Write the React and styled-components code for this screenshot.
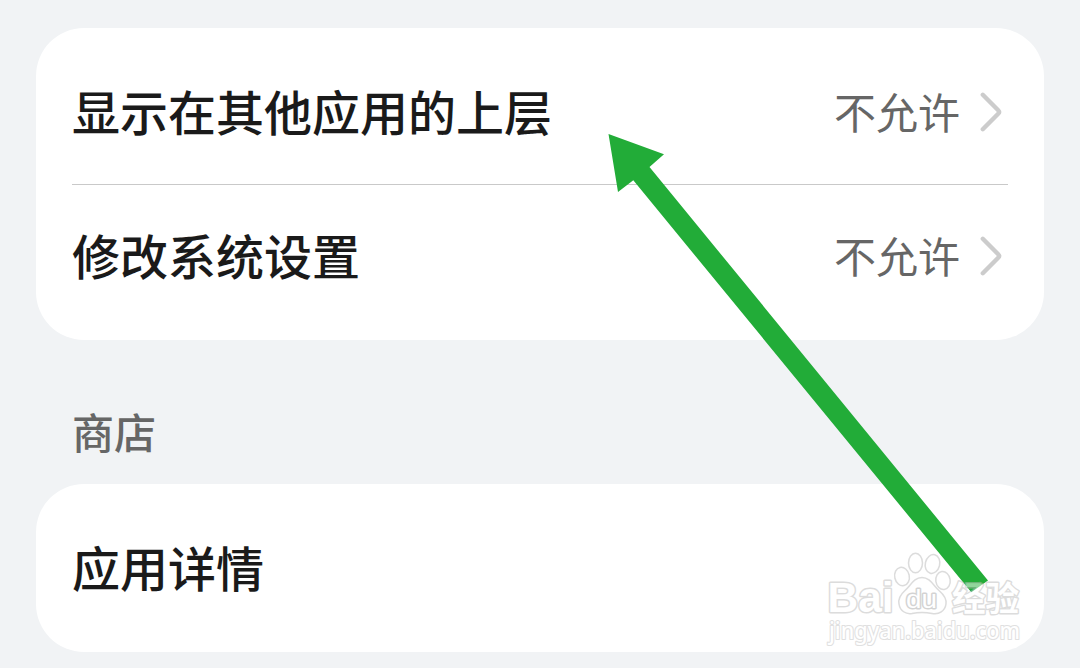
import React from 'react'
import styled, { createGlobalStyle } from 'styled-components';

const permissions = [
  { label: '显示在其他应用的上层', value: '不允许' },
  { label: '修改系统设置', value: '不允许' },
];

function Chevron() {
  return (
    <ChevronIcon viewBox="0 0 24 40">
      <path d="M2.8 2.8 L18.2 18.2 Q20 20 18.2 21.8 L2.8 37.2" />
    </ChevronIcon>
  )
}

function Arrow() {
  return (
    <Overlay viewBox="0 0 1080 668">
      <polygon
        fill="#22ac38"
        points="608.5,134 664,154.3 649.5,167 988,580.5 971.3,592.3 633.3,180.3 618,192"
      />
    </Overlay>
  )
}

function Watermark() {
  return (
    <Overlay viewBox="0 0 1080 668">
      <Outlined>
        <BaiText x="827.5" y="612" fontSize="43" textLength="66" lengthAdjust="spacingAndGlyphs">Bai</BaiText>
        <ellipse cx="902" cy="576.5" rx="7.3" ry="9.3" transform="rotate(-12 902 576.5)" />
        <ellipse cx="915.5" cy="563" rx="7" ry="9.7" />
        <ellipse cx="932.5" cy="564" rx="7.2" ry="9.5" transform="rotate(14 932.5 564)" />
        <ellipse cx="943" cy="580.5" rx="7.2" ry="9" transform="rotate(-8 943 580.5)" />
        <path d="M922 577.5 C914 577.5 911 585 905 590.5 C900 595 898 599 899 604 C900 611 906 614.5 912 613.5 C919 612 925 612 932 613.5 C939 615 945 611 946 604 C947 598 943 594 939 590.5 C933 585 930 577.5 922 577.5 Z" />
        <DuText x="906" y="607.5" fontSize="25" textLength="31" lengthAdjust="spacingAndGlyphs">du</DuText>
        <CjkText x="952" y="611" fontSize="34" textLength="67" lengthAdjust="spacingAndGlyphs">经验</CjkText>
        <SiteText x="829" y="638.5" fontSize="23" textLength="191" lengthAdjust="spacingAndGlyphs">jingyan.baidu.com</SiteText>
      </Outlined>
    </Overlay>
  )
}

function App() {
  return (
    <Page>
      <GlobalStyle />
      <Card>
        {permissions.map((item) => (
          <Row key={item.label}>
            <Label>{item.label}</Label>
            <Value>{item.value}</Value>
            <Chevron />
          </Row>
        ))}
      </Card>
      <SectionTitle>商店</SectionTitle>
      <Card>
        <Row>
          <Label>应用详情</Label>
        </Row>
      </Card>
      <Arrow />
      <Watermark />
    </Page>
  )
}

const GlobalStyle = createGlobalStyle`
  body {
    margin: 0;
    background: #f1f3f5;
    font-family: "Noto Sans CJK SC", sans-serif;
  }
`;

const Page = styled.div`
  position: relative;
  box-sizing: border-box;
  width: 1080px;
  height: 668px;
  padding: 28px 36px 0;
  overflow: hidden;
  background: #f1f3f5;
`;

const Card = styled.div`
  padding: 12px 36px;
  border-radius: 48px;
  background: #fff;
`;

const Row = styled.div`
  display: flex;
  align-items: center;
  box-sizing: border-box;
  height: 144px;
  & + & {
    box-shadow: inset 0 1px 0 #c9c9c9;
  }
`;

const Label = styled.span`
  flex: 1;
  padding-bottom: 4px;
  color: #1a1a1a;
  font-size: 48px;
  font-weight: 500;
  line-height: 64px;
`;

const Value = styled.span`
  padding-bottom: 2px;
  color: #666;
  font-size: 42px;
  line-height: 56px;
`;

const SectionTitle = styled.div`
  display: flex;
  align-items: flex-end;
  box-sizing: border-box;
  height: 144px;
  padding: 0 36px 25px;
  color: #666;
  font-size: 42px;
  font-weight: 500;
  line-height: 56px;
`;

const ChevronIcon = styled.svg`
  width: 24px;
  height: 40px;
  margin: 0 4px 0 20px;
  fill: none;
  stroke: #ccc;
  stroke-width: 4.4;
  stroke-linecap: round;
`;

const Overlay = styled.svg`
  position: absolute;
  top: 0;
  left: 0;
  width: 1080px;
  height: 668px;
  pointer-events: none;
`;

const Outlined = styled.g`
  opacity: 0.5;
  fill: #fff;
  stroke: #bababa;
  stroke-width: 1.5;
  stroke-linejoin: round;
  font-family: "Liberation Sans", sans-serif;
  font-weight: 700;
`;

const BaiText = styled.text`
  paint-order: stroke;
  stroke-width: 3;
`;

const DuText = styled.text`
  font-weight: 400;
  paint-order: stroke;
  stroke: #a8a8a8;
  stroke-width: 2.8;
`;

const CjkText = styled.text`
  font-family: "Noto Sans CJK SC", sans-serif;
  paint-order: stroke;
  stroke-width: 2.8;
`;

const SiteText = styled.text`
  font-family: "Noto Sans", sans-serif;
  font-weight: 500;
  paint-order: stroke;
  stroke: #c2c2c2;
  stroke-width: 2.2;
`;

export default App;
